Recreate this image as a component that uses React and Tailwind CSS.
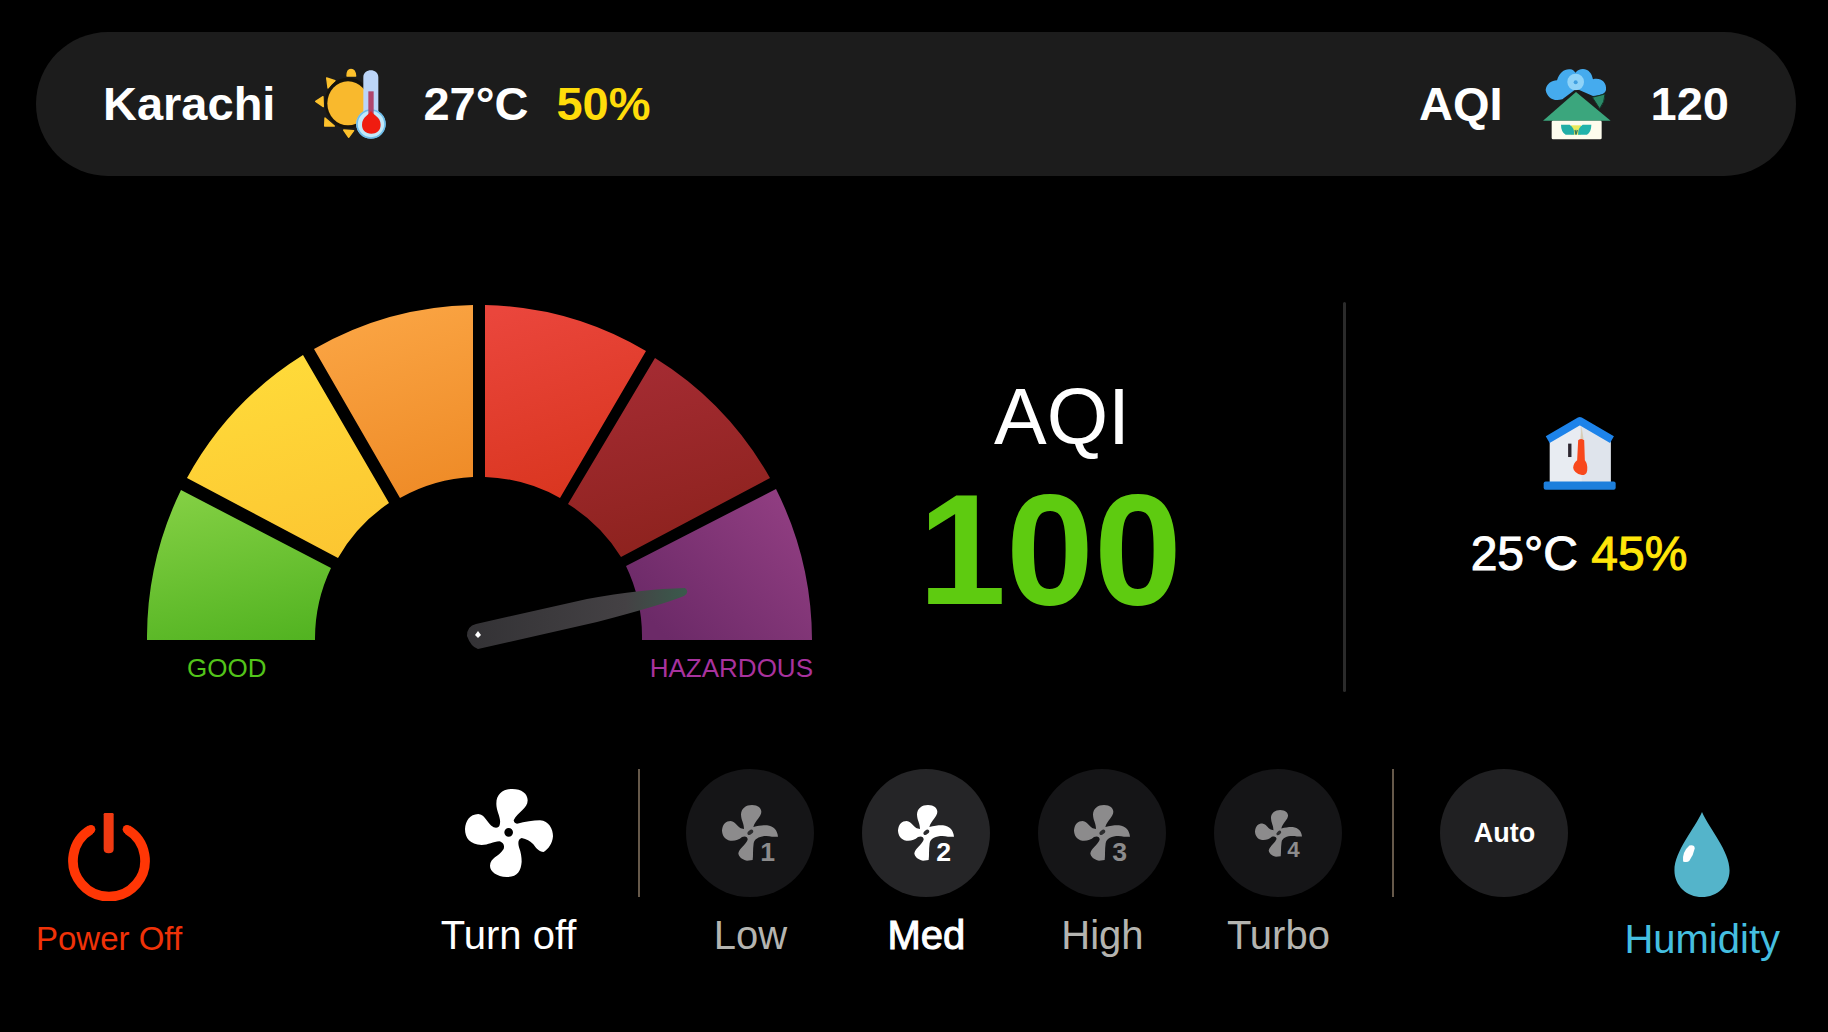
import { useState } from 'react';
import clsx from 'clsx';

const SEGMENTS = [
  { id: 'good', from: '#84d044', to: '#52b321', d: 'M0 336 A333 336 0 0 1 34 186 L184 264 A164 164 0 0 0 168 336 Z' },
  { id: 'moderate', from: '#ffdc3a', to: '#fcc531', d: 'M40 174 A333 336 0 0 1 156 51 L242 199 A164 164 0 0 0 191 254 Z' },
  { id: 'sensitive', from: '#fba645', to: '#ee8a26', d: 'M167 45 A333 336 0 0 1 326 1 L326 173 A164 164 0 0 0 253 194 Z' },
  { id: 'unhealthy', from: '#ea463c', to: '#d8341d', d: 'M338 1 A333 336 0 0 1 499 47 L413 194 A164 164 0 0 0 338 173 Z' },
  { id: 'very-unhealthy', from: '#a62c34', to: '#8a211b', d: 'M508 54 A333 336 0 0 1 623 174 L474 253 A164 164 0 0 0 421 200 Z' },
  { id: 'hazardous', from: '#933f83', to: '#6c2a68', d: 'M629 185 A333 336 0 0 1 665 336 L495 336 A164 164 0 0 0 479 262 Z' },
];

const SPEEDS = [
  { label: 'Low', level: 1 },
  { label: 'Med', level: 2 },
  { label: 'High', level: 3 },
  { label: 'Turbo', level: 4 },
];

export default function App() {
  const [speed, setSpeed] = useState('Med');

  return (
    <div className="min-h-screen flex flex-col bg-black text-white font-['Liberation_Sans',Arial,sans-serif]">

      {/* Outdoor weather bar */}
      <header className="mt-8 ml-9 mr-8 h-36 px-[67px] rounded-full bg-[#1c1c1c] flex items-center justify-between text-[47px] font-bold">
        <div className="flex items-center">
          <span>Karachi</span>
          <SunIcon className="size-[72px] ml-10 mr-9" />
          <span>27°C</span>
          <span className="ml-7 text-[#ffdc0a]">50%</span>
        </div>
        <div className="flex items-center gap-10">
          <span>AQI</span>
          <AirHouseIcon className="w-[68px] h-[72px]" />
          <span>120</span>
        </div>
      </header>

      {/* Gauge and readings */}
      <main className="flex-1 flex items-center pt-12">
        <div className="flex-1 flex items-stretch h-[390px]">
          <div className="pl-[147px] pt-0.5">
            <Gauge />
            <div className="mt-1 flex justify-between text-[26px] leading-7">
              <span className="pl-10 text-[#52c41a]">GOOD</span>
              <span className="text-[#a8329e]">HAZARDOUS</span>
            </div>
          </div>
          <div className="flex-1 flex flex-col items-center justify-center gap-3 pt-3 pr-14">
            <p className="pl-6 text-[79px] leading-20">AQI</p>
            <p className="text-[158px] leading-40 font-bold text-[#5ecb10]">100</p>
          </div>
        </div>
        <div className="w-[3px] h-[390px] bg-[#2b2b2b] rounded-full" />
        <div className="w-[482px] pr-4 flex flex-col items-center gap-10">
          <HomeTempIcon className="w-[73px] h-[74px]" />
          <p className="text-5xl leading-12 [-webkit-text-stroke:1px]">
            25°C <span className="text-[#ffe60a]">45%</span>
          </p>
        </div>
      </main>

      {/* Controls */}
      <footer className="flex items-end justify-between pl-9 pr-12 pb-[73px]">
        <button className="flex flex-col items-center gap-[18px] text-[#f03208] text-[33px] leading-10 cursor-pointer">
          <PowerIcon className="w-[82px] h-[88px]" />
          Power Off
        </button>

        <div className="ml-auto mr-14 pb-1 flex items-start gap-12 text-[40px] leading-10">
          <button className="mr-3 flex flex-col items-center gap-[18px] cursor-pointer">
            <span className="h-32 flex items-center">
              <FanIcon className="size-[88px]" />
            </span>
            Turn off
          </button>
          <div className="w-0.5 h-32 ml-0.5 -mr-0.5 bg-[#66594a]" />
          {SPEEDS.map(({ label, level }) => (
            <SpeedButton
              key={label}
              label={label}
              level={level}
              active={speed === label}
              onClick={() => setSpeed(label)}
            />
          ))}
          <div className="w-0.5 h-32 ml-0.5 -mr-0.5 bg-[#66594a]" />
          <button
            className="size-32 rounded-full bg-[#202022] text-[27px] font-bold cursor-pointer"
            onClick={() => setSpeed('Auto')}
          >
            Auto
          </button>
        </div>

        <button className="flex flex-col items-center gap-[22px] text-[#45bfe0] text-[40px] leading-10 cursor-pointer">
          <DropIcon className="w-14 h-[85px]" />
          Humidity
        </button>
      </footer>
    </div>
  );
}

function SpeedButton({ label, level, active, onClick }) {
  return (
    <button
      className={clsx(
        'w-32 flex flex-col items-center gap-[18px] cursor-pointer',
        active ? 'text-white' : 'text-[#b4b4b0]'
      )}
      aria-pressed={active}
      onClick={onClick}
    >
      <span
        className={clsx(
          'size-32 rounded-full flex items-center justify-center',
          active ? 'bg-[#252527] text-white' : 'bg-[#151517] text-[#8c8b8c]'
        )}
      >
        <SpeedIcon level={level} className={level === 4 ? 'size-[47px]' : 'size-14'} />
      </span>
      <span className={clsx(active && '[-webkit-text-stroke:1px]')}>{label}</span>
    </button>
  );
}

function Gauge() {
  return (
    <svg viewBox="0 0 666 346" className="block w-[666px] h-[346px]" role="img" aria-label="Air quality gauge">
      <defs>
        {SEGMENTS.map((s) => (
          <linearGradient key={s.id} id={s.id} x1={s.id === 'hazardous' ? 0.9 : 0.2} y1="0" x2={s.id === 'hazardous' ? 0 : 0.5} y2={s.id === 'hazardous' ? 0.7 : 1.1}>
            <stop offset="0" stopColor={s.from} />
            <stop offset="1" stopColor={s.to} />
          </linearGradient>
        ))}
        <linearGradient id="needle" x1="0" x2="1">
          <stop offset="0" stopColor="#333235" />
          <stop offset="0.72" stopColor="#444144" />
          <stop offset="1" stopColor="#3a5a4c" />
        </linearGradient>
      </defs>
      {SEGMENTS.map((s) => <path key={s.id} d={s.d} fill={`url(#${s.id})`} />)}
      <path
        d="M329 320 L440 295 Q495 285 538 284 Q543 288 537 292 Q515 301 450 318 L331 345 Q324 343 320 332 Q320 322 329 320 Z"
        fill="url(#needle)"
      />
      <path d="M331 327 L334 331 L331 334 L328 331 Z" fill="#fff" />
    </svg>
  );
}

function SunIcon({ className }) {
  return (
    <svg viewBox="0 0 216 216" className={className} aria-hidden="true">
      <g fill="#fdc12c" stroke="#fdc12c" strokeWidth="4" strokeLinejoin="round">
        <path d="M96 24 C96 10 102 4 108 4 C115 4 121 10 122 24 Z" />
        <path d="M35 30 L60 38 L39 60 Z" />
        <path d="M2 100 L24 86 L25 116 Z" />
        <path d="M30 150 L58 174 L29 174 Z" />
        <path d="M86 186 L116 188 L101 208 Z" />
      </g>
      <ellipse cx="99" cy="105" rx="70" ry="76" fill="#16130c" />
      <ellipse cx="99" cy="106" rx="62" ry="66" fill="#f9b92d" />
      <path d="M145 28 C145 0 190 0 190 28 L190 130 A44 44 0 1 1 145 130 Z" fill="#bcd5f8" />
      <circle cx="168" cy="168" r="42" fill="#c2e9fa" stroke="#6dbdea" strokeWidth="5" />
      <path d="M160 70 H176 V145 H160 Z" fill="#b0456c" />
      <path d="M168 128 C172 140 197 145 197 170 C197 188 184 197 169 197 C152 197 141 186 141 170 C141 146 164 140 168 128 Z" fill="#f01c10" />
    </svg>
  );
}

function AirHouseIcon({ className }) {
  return (
    <svg viewBox="0 0 204 216" className={className} aria-hidden="true">
      <path
        d="M8 66 C10 47 26 38 42 37 C50 14 62 5 78 4 C88 2 92 8 98 14 C104 4 120 0 132 6 C144 12 148 25 150 34 C172 28 192 42 189 66 C186 80 168 82 150 84 L100 62 L58 94 C30 102 12 88 8 66 Z"
        fill="#45abee"
      />
      <circle cx="98" cy="42" r="25" fill="#8fd3f8" />
      <circle cx="98" cy="43" r="6" fill="#3f9fe0" />
      <path d="M148 88 L186 78 Q186 102 170 122 Z" fill="#2b8a68" stroke="#123528" strokeWidth="3" />
      <path d="M99 66 L203 158 H0 Z" fill="#1c1c1c" />
      <path d="M99 72 L203 158 H0 Z" fill="#3ba67d" />
      <rect x="26" y="158" width="150" height="56" rx="4" fill="#fdfced" />
      <path d="M84 172 H114 V200 H84 Z" fill="#e9ea5a" />
      <path d="M54 170 H80 Q94 178 94 200 H68 Q54 192 54 170 Z" fill="#21aea6" />
      <path d="M145 170 H119 Q105 178 105 200 H132 Q145 192 145 170 Z" fill="#21b3ab" />
      <path d="M96 186 L99 200 L103 186" fill="none" stroke="#37775a" strokeWidth="4" />
    </svg>
  );
}

function HomeTempIcon({ className }) {
  return (
    <svg viewBox="0 0 218 220" className={className} aria-hidden="true">
      <path d="M20 72 L110 20 L202 72 V200 H20 Z" fill="#e8ecf2" />
      <path d="M110 20 L202 72 V200 H116 Z" fill="#dfe4ec" />
      <path d="M14 70 L110 14 L206 70" fill="none" stroke="#1d83ea" strokeWidth="23" strokeLinejoin="round" />
      <rect x="2" y="195" width="215" height="25" rx="6" fill="#1d7fdc" />
      <rect x="75" y="82" width="10" height="40" fill="#2c2630" />
      <path d="M115 30 L121 68 H112 Z" fill="#d8cdb6" />
      <path d="M105 72 Q114 64 123 72 L125 132 Q134 142 132 162 Q130 176 116 176 Q92 170 90 154 Q91 140 102 132 Z" fill="#f8481c" />
    </svg>
  );
}

function PowerIcon({ className }) {
  return (
    <svg viewBox="0 0 246 264" className={className} fill="none" stroke="#ff3605" aria-hidden="true">
      <path d="M68 50 A108 108 0 1 0 178 50" strokeWidth="29" strokeLinecap="butt" />
      <path d="M107 4 Q107 0 111 0 H133 Q137 0 137 4 V108 Q137 121 122 121 Q107 121 107 108 Z" fill="#f03a12" stroke="none" />
      <circle cx="69" cy="49" r="13" fill="#ff3605" stroke="none" />
      <circle cx="177" cy="49" r="13" fill="#ff3605" stroke="none" />
    </svg>
  );
}

function FanIcon({ className }) {
  return (
    <svg viewBox="0 0 264 264" className={className} fill="currentColor" aria-hidden="true">
      <path
        fillRule="evenodd"
        d="M104 108 C110 85 94 70 94 44 C94 14 115 0 142 0 C170 0 188 14 188 34 C188 60 158 68 146 94 Q148 104 156 104 C180 98 205 94 225 94 C252 96 264 120 264 142 C262 165 250 180 236 189 C222 189 214 178 205 166 C195 155 185 150 170 147 C160 150 158 160 162 175 C168 190 170 205 170 218 C168 245 158 264 125 264 C95 262 75 248 75 230 C76 205 100 205 116 180 C120 165 112 160 103 157 C85 158 70 168 50 168 C15 166 0 148 0 120 C2 95 14 76 40 75 C65 80 62 100 86 115 C96 118 102 115 104 108 Z M131 117 A13 13 0 1 0 131 143 A13 13 0 1 0 131 117 Z"
      />
    </svg>
  );
}

function SpeedIcon({ level, className }) {
  return (
    <svg viewBox="0 0 168 168" className={clsx('overflow-visible', className)} fill="currentColor" aria-hidden="true">
      <path d="M66 72 C66 55 57 45 57 28 C58 10 72 0 90 0 C108 0 118 10 118 20 C118 35 100 45 94 66 C110 62 125 60 135 61 C155 64 166 75 168 95 L150 95 C125 90 98 96 95 115 C92 135 94 150 92 165 L75 167 C60 165 50 155 49 145 C52 128 70 122 77 104 C77 96 70 92 60 96 C50 105 40 108 25 107 C8 105 0 90 0 76 C2 56 12 48 26 48 C42 52 44 62 56 70 Z" />
      <ellipse cx="85" cy="82" rx="10" ry="6" transform="rotate(-40 85 82)" fill="#2c2c2e" />
      <text x="115" y="167" fontSize="80" fontWeight="bold">{level}</text>
    </svg>
  );
}

function DropIcon({ className }) {
  return (
    <svg viewBox="0 0 168 256" className={className} aria-hidden="true">
      <path d="M84 0 C106 50 167 118 167 176 C167 222 130 256 84 256 C38 256 1 222 1 176 C1 118 62 50 84 0 Z" fill="#54b4ca" />
      <path d="M46 101 Q62 98 62 110 Q58 130 46 147 Q40 153 27 149 Q24 120 46 101 Z" fill="#fff" />
    </svg>
  );
}
